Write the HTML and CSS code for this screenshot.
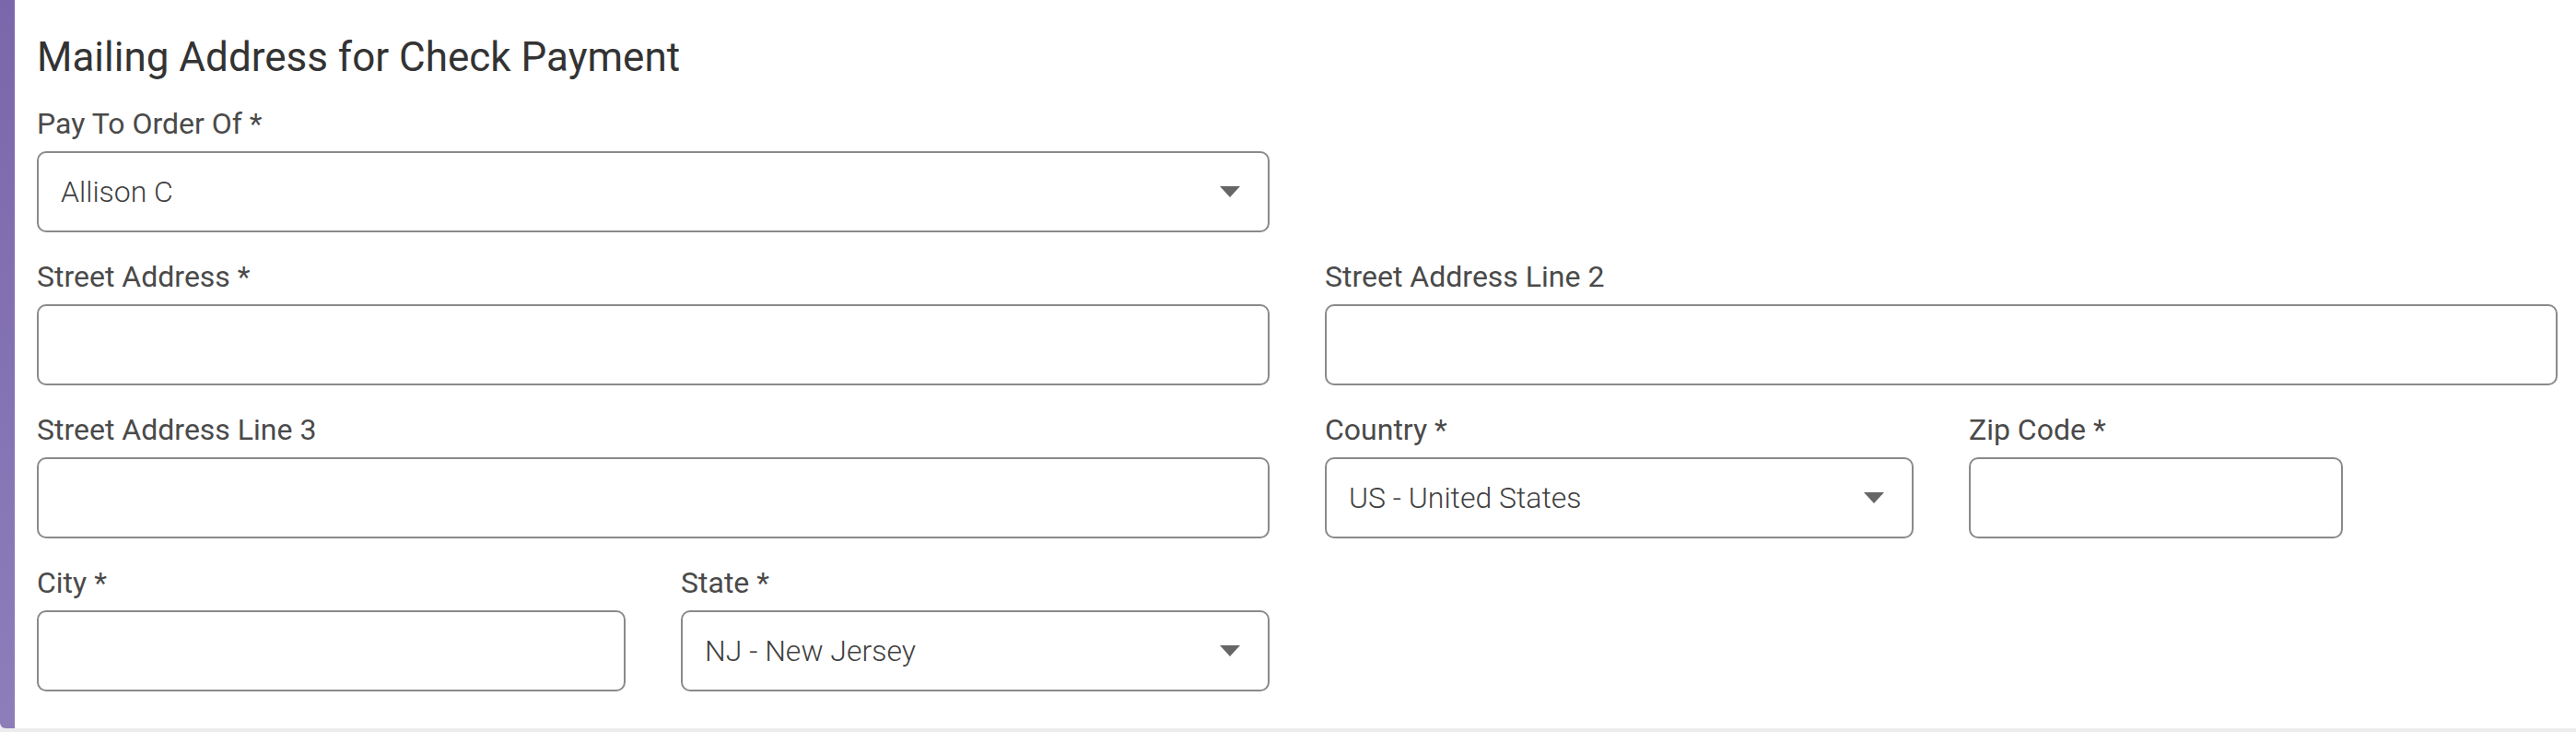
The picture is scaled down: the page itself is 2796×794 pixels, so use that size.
FILE: index.html
```html
<!DOCTYPE html>
<html lang="en">
<head>
<meta charset="utf-8">
<title>Mailing Address for Check Payment</title>
<link rel="stylesheet" href="styles.css">
</head>
<body>
<section class="card">
  <div class="accent"></div>
  <div class="card-body">
    <h2 class="title">Mailing Address for Check Payment</h2>
    <div class="grid">
      <div class="field span-6">
        <label class="label">Pay To Order Of *</label>
        <div class="box select"><span class="value">Allison C</span><span class="caret"></span></div>
      </div>
      <div class="span-6"></div>

      <div class="field span-6">
        <label class="label">Street Address *</label>
        <div class="box"></div>
      </div>
      <div class="field span-6">
        <label class="label">Street Address Line 2</label>
        <div class="box"></div>
      </div>

      <div class="field span-6">
        <label class="label">Street Address Line 3</label>
        <div class="box"></div>
      </div>
      <div class="field span-3">
        <label class="label">Country *</label>
        <div class="box select"><span class="value">US - United States</span><span class="caret"></span></div>
      </div>
      <div class="field span-2">
        <label class="label">Zip Code *</label>
        <div class="box"></div>
      </div>
      <div class="span-1"></div>

      <div class="field span-3">
        <label class="label">City *</label>
        <div class="box"></div>
      </div>
      <div class="field span-3">
        <label class="label">State *</label>
        <div class="box select"><span class="value">NJ - New Jersey</span><span class="caret"></span></div>
      </div>
    </div>
  </div>
</section>
</body>
</html>
```
FILE: styles.css
```css
html, body {
  margin: 0;
  padding: 0;
}
body {
  background: #ececec;
  font-family: Roboto, "Liberation Sans", Arial, sans-serif;
  width: 2796px;
  height: 794px;
  overflow: hidden;
}
.card {
  display: flex;
  background: #ffffff;
  height: 790px;
  border-bottom-left-radius: 6px;
  overflow: hidden;
}
.accent {
  flex: 0 0 16px;
  background: linear-gradient(to bottom, #7a67ab, #8d7eba);
}
.card-body {
  flex: 1;
  padding: 36px 20px 0 24px;
}
.title {
  margin: 0 0 26px 0;
  font-size: 44px;
  line-height: 52px;
  font-weight: 400;
  color: #333333;
}
.grid {
  display: grid;
  grid-template-columns: repeat(12, 1fr);
  column-gap: 60px;
}
.span-6 { grid-column: span 6; }
.span-3 { grid-column: span 3; }
.span-2 { grid-column: span 2; }
.span-1 { grid-column: span 1; }
.field {
  display: flex;
  flex-direction: column;
  margin-bottom: 28px;
}
.label {
  font-size: 32px;
  line-height: 40px;
  color: #4a4a4a;
  margin-bottom: 10px;
}
.box {
  height: 88px;
  box-sizing: border-box;
  border: 2px solid #8a8a8a;
  border-radius: 10px;
  background: #fff;
  display: flex;
  align-items: center;
  padding: 0 30px 0 24px;
}
.value {
  flex: 1;
  font-size: 32px;
  font-weight: 300;
  color: #3f3f3f;
}
.caret {
  width: 0;
  height: 0;
  border-left: 11px solid transparent;
  border-right: 11px solid transparent;
  border-top: 12px solid #666666;
}
```
